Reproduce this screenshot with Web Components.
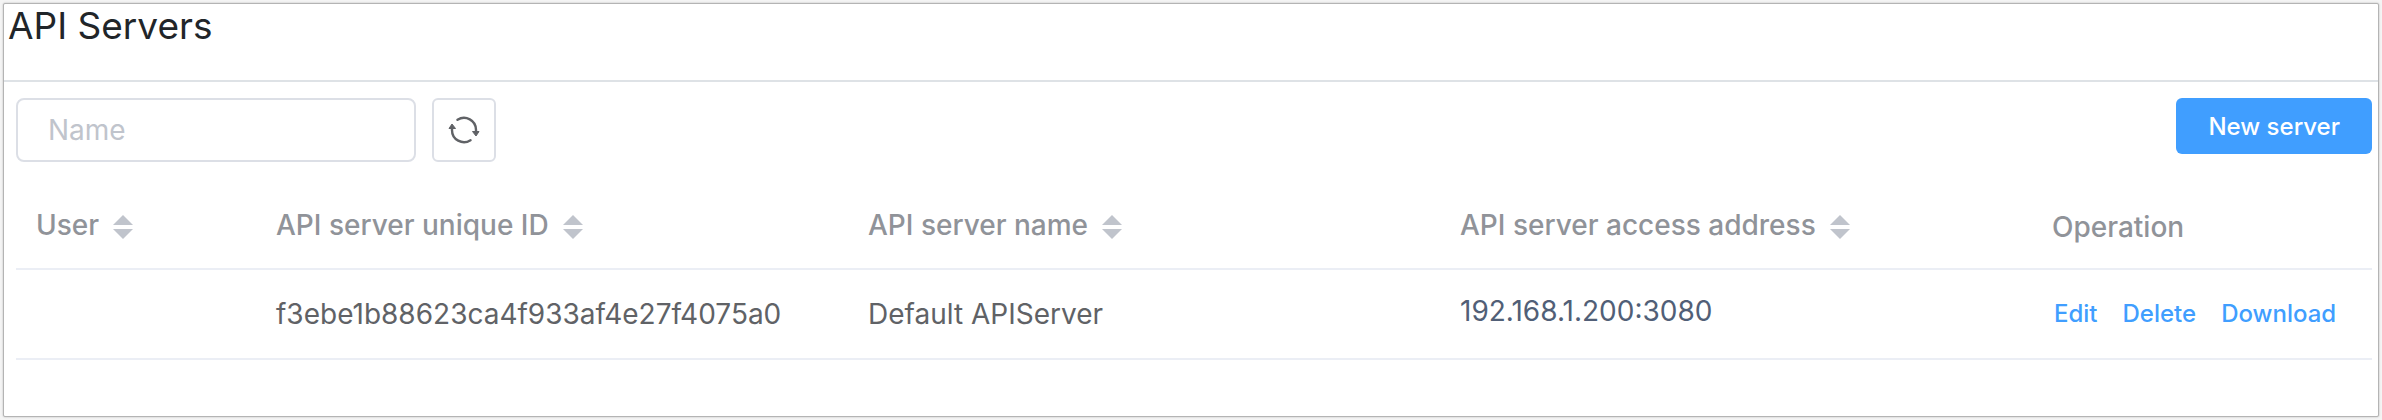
<!DOCTYPE html>
<html lang="en">
<head>
<meta charset="UTF-8">
<title>API Servers</title>
<style>
	body {
		margin: 0;
		background-color: #f4f4f4;
		font-family: Inter, "Liberation Sans", sans-serif;
	}
</style>
</head>
<body>
<server-page>
	<page-heading>API Servers</page-heading>
	<tool-bar>
		<search-field slot="filters" placeholder="Name"></search-field>
		<refresh-button slot="filters"></refresh-button>
		<primary-button>New server</primary-button>
	</tool-bar>
	<server-table></server-table>
</server-page>

<script>
const createTemplate = (html) => {
	const template = document.createElement('template');
	template.innerHTML = html;
	return template;
};

class BaseElement extends HTMLElement {
	constructor() {
		super();
		this.attachShadow({ mode: 'open' });
		this.shadowRoot.appendChild(this.constructor.template.content.cloneNode(true));
	}
}

class ServerPage extends BaseElement {
	static template = createTemplate(`
		<style>
			:host {
				display: block;
				box-sizing: border-box;
				min-height: 100vh;
				padding: 3px;
				--primary-color: #409eff;
				--border-color: #dcdfe6;
				--text-color: #606266;
			}

			main {
				box-sizing: border-box;
				min-height: calc(100vh - 6px);
				border: 1px solid #b4b4b4;
				border-radius: 2px;
				background-color: #ffffff;
				box-shadow: 0 0 2px rgba(0, 0, 0, 0.25);
			}
		</style>

		<main>
			<slot></slot>
		</main>
	`);
}

class PageHeading extends BaseElement {
	static template = createTemplate(`
		<style>
			:host {
				display: block;
				padding: 0 4px 32px;
				border-bottom: 2px solid #dee2e6;
			}

			h1 {
				margin: 0;
				color: #212529;
				font-size: 37px;
				font-weight: 400;
				line-height: 44px;
			}
		</style>

		<h1><slot></slot></h1>
	`);
}

class ToolBar extends BaseElement {
	static template = createTemplate(`
		<style>
			:host {
				display: flex;
				align-items: flex-start;
				justify-content: space-between;
				padding: 16px 6px 18px 12px;
			}

			.filters {
				display: flex;
				gap: 16px;
			}
		</style>

		<div class="filters">
			<slot name="filters"></slot>
		</div>
		<slot></slot>
	`);
}

class SearchField extends BaseElement {
	static template = createTemplate(`
		<style>
			:host {
				display: block;
				width: 400px;
			}

			input {
				box-sizing: border-box;
				width: 100%;
				height: 64px;
				padding: 0 30px;
				border: 2px solid var(--border-color);
				border-radius: 8px;
				background-color: #ffffff;
				color: var(--text-color);
				font-family: inherit;
				font-size: 28px;
				outline: none;
			}

			input::placeholder {
				color: #c0c4cc;
				opacity: 1;
			}

			input:focus {
				border-color: var(--primary-color);
			}
		</style>

		<input type="text" />
	`);

	connectedCallback() {
		const input = this.shadowRoot.querySelector('input');
		input.placeholder = this.getAttribute('placeholder');
		input.setAttribute('aria-label', this.getAttribute('placeholder'));
	}
}

class RefreshButton extends BaseElement {
	static template = createTemplate(`
		<style>
			:host {
				display: block;
			}

			button {
				display: flex;
				align-items: center;
				justify-content: center;
				width: 64px;
				height: 64px;
				padding: 0;
				border: 2px solid var(--border-color);
				border-radius: 6px;
				background-color: #ffffff;
				color: var(--text-color);
				cursor: pointer;
			}

			button:hover {
				border-color: var(--primary-color);
				color: var(--primary-color);
			}
		</style>

		<button type="button" aria-label="Refresh">
			<svg width="32" height="28" viewBox="0 0 32 28" fill="none" aria-hidden="true">
				<path d="M9.5 3.8A12 12 0 0 1 28 14V16" stroke="currentColor" stroke-width="2.4" stroke-linecap="round" />
				<path d="M22.5 24.2A12 12 0 0 1 4 14V12" stroke="currentColor" stroke-width="2.4" stroke-linecap="round" />
				<path d="M24.5 15.5h6.5L28 20z" fill="currentColor" stroke="currentColor" stroke-linejoin="round" />
				<path d="M1 12.5h6.5L4 8z" fill="currentColor" stroke="currentColor" stroke-linejoin="round" />
			</svg>
		</button>
	`);
}

class PrimaryButton extends BaseElement {
	static template = createTemplate(`
		<style>
			:host {
				display: block;
			}

			button {
				height: 56px;
				padding: 0 32px;
				border: 0;
				border-radius: 6px;
				background-color: var(--primary-color);
				color: #ffffff;
				font-family: inherit;
				font-size: 24px;
				font-weight: 500;
				cursor: pointer;
			}

			button:hover {
				background-color: #66b1ff;
			}
		</style>

		<button type="button"><slot></slot></button>
	`);
}

class SortLabel extends BaseElement {
	static template = createTemplate(`
		<style>
			:host {
				display: inline;
			}

			button {
				display: inline-flex;
				align-items: center;
				height: 68px;
				margin-left: 10px;
				padding: 0 4px;
				border: 0;
				background: none;
				color: #c0c4cc;
				vertical-align: middle;
				cursor: pointer;
			}
		</style>

		<slot></slot><button type="button" aria-label="Sort">
			<svg width="20" height="24" viewBox="0 0 20 24" fill="currentColor" aria-hidden="true">
				<path d="M10 0l10 10H0z" />
				<path d="M0 14h20L10 24z" />
			</svg>
		</button>
	`);
}

class ServerTable extends BaseElement {
	static template = createTemplate(`
		<style>
			:host {
				display: block;
				padding: 0 6px 0 12px;
			}

			table {
				width: 100%;
				table-layout: fixed;
				border-collapse: separate;
				border-spacing: 0;
				font-size: 28px;
				line-height: 46px;
			}

			.user {
				width: 240px;
			}

			.operation {
				width: 340px;
			}

			th,
			td {
				box-sizing: border-box;
				height: 90px;
				padding: 0 20px;
				border-bottom: 2px solid #ebeef5;
				color: var(--text-color);
				text-align: left;
				white-space: nowrap;
			}

			th {
				padding-top: 6px;
				color: #909399;
				font-weight: 500;
			}

			.address {
				padding-bottom: 6px;
				color: #515f77;
			}

			.actions {
				display: flex;
				gap: 25px;
				padding-left: 2px;
			}

			a {
				color: var(--primary-color);
				font-size: 24px;
				font-weight: 500;
				text-decoration: none;
			}

			a:hover {
				color: #66b1ff;
			}
		</style>

		<table>
			<thead>
				<tr>
					<th class="user"><sort-label>User</sort-label></th>
					<th><sort-label>API server unique ID</sort-label></th>
					<th><sort-label>API server name</sort-label></th>
					<th><sort-label>API server access address</sort-label></th>
					<th class="operation">Operation</th>
				</tr>
			</thead>
			<tbody></tbody>
		</table>
	`);

	connectedCallback() {
		const servers = [
			{
				user: '',
				id: 'f3ebe1b88623ca4f933af4e27f4075a0',
				name: 'Default APIServer',
				address: '192.168.1.200:3080'
			}
		];

		this.shadowRoot.querySelector('tbody').innerHTML = servers.map((server) => `
			<tr>
				<td>${server.user}</td>
				<td>${server.id}</td>
				<td>${server.name}</td>
				<td class="address">${server.address}</td>
				<td>
					<div class="actions">
						<a href="#edit">Edit</a>
						<a href="#delete">Delete</a>
						<a href="#download">Download</a>
					</div>
				</td>
			</tr>
		`).join('');
	}
}

customElements.define('server-page', ServerPage);
customElements.define('page-heading', PageHeading);
customElements.define('tool-bar', ToolBar);
customElements.define('search-field', SearchField);
customElements.define('refresh-button', RefreshButton);
customElements.define('primary-button', PrimaryButton);
customElements.define('sort-label', SortLabel);
customElements.define('server-table', ServerTable);
</script>
</body>
</html>
